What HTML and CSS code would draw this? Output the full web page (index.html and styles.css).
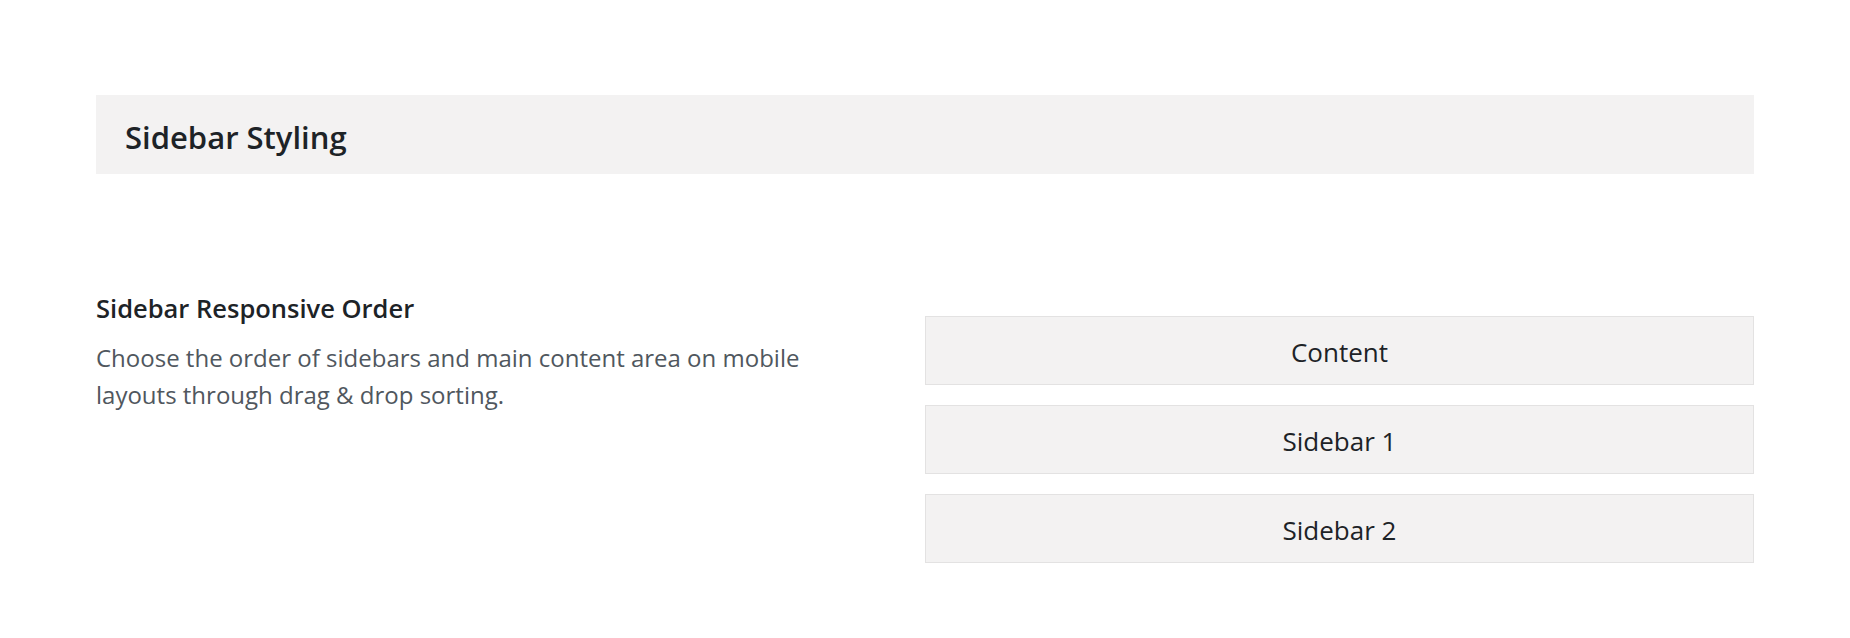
FILE: index.html
```html
<!DOCTYPE html>
<html>
<head>
<meta charset="utf-8">
<link rel="stylesheet" href="styles.css">
</head>
<body>
<div class="page">
  <div class="section-head">
    <h2 class="section-title">Sidebar Styling</h2>
  </div>
  <div class="setting">
    <div class="setting-info">
      <h3 class="setting-title">Sidebar Responsive Order</h3>
      <p class="setting-desc">Choose the order of sidebars and main content area on mobile layouts through drag &amp; drop sorting.</p>
    </div>
    <div class="setting-control">
      <div class="sort-item">Content</div>
      <div class="sort-item">Sidebar 1</div>
      <div class="sort-item">Sidebar 2</div>
    </div>
  </div>
</div>
</body>
</html>
```

FILE: styles.css
```css
html, body {
  margin: 0;
  padding: 0;
  background: #ffffff;
}
body {
  font-family: "Open Sans", "Noto Sans", "Liberation Sans", sans-serif;
  color: #1d2327;
}
.page {
  padding: 95px 96px 0 96px;
}
.section-head {
  background: #f3f2f2;
  height: 79px;
  box-sizing: border-box;
  display: flex;
  align-items: center;
  padding: 5px 0 0 29px;
}
.section-title {
  margin: 0;
  font-size: 31px;
  font-weight: 600;
  line-height: 40px;
  color: #1d2327;
}
.setting {
  display: grid;
  grid-template-columns: 1fr 1fr;
  margin-top: 119px;
}
.setting-info {
  padding-right: 60px;
}
.setting-title {
  margin: 0;
  font-size: 25.5px;
  font-weight: 600;
  line-height: 30px;
  color: #1d2327;
}
.setting-desc {
  margin: 16px 0 0 0;
  font-size: 24px;
  line-height: 37px;
  color: #50575e;
}
.setting-control {
  display: flex;
  flex-direction: column;
  gap: 20px;
  padding-top: 23px;
}
.sort-item {
  height: 69px;
  box-sizing: border-box;
  padding-top: 2px;
  background: #f3f2f2;
  border: 1px solid #e3e2e2;
  display: flex;
  align-items: center;
  justify-content: center;
  font-size: 26px;
  color: #1d2327;
}
```
